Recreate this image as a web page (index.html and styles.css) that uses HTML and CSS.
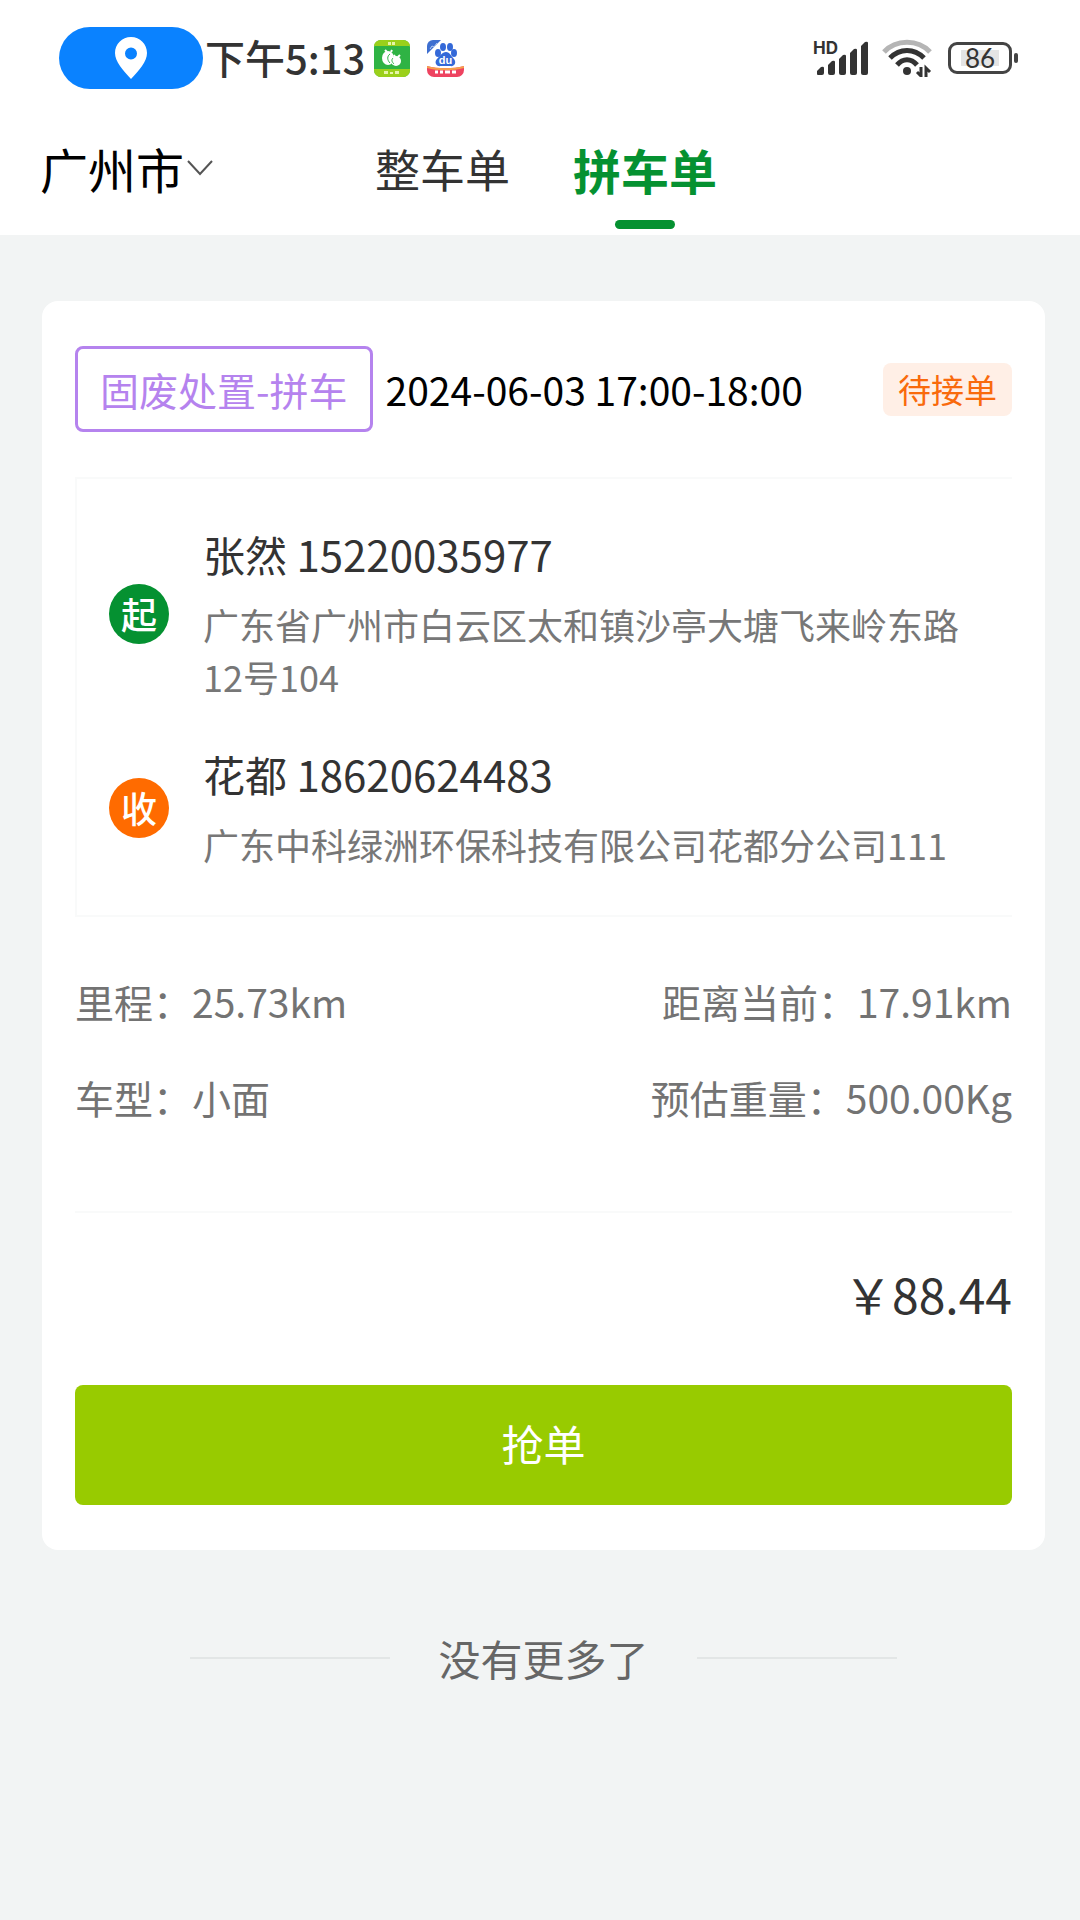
FILE: index.html
```html
<!DOCTYPE html>
<html lang="zh-CN">
<head>
<meta charset="utf-8">
<meta name="viewport" content="width=device-width, initial-scale=1">
<title>拼车单</title>
<link rel="stylesheet" href="styles.css">
</head>
<body>
<header class="top">
  <div class="status-bar">
    <span class="location-pill">
      <svg width="32" height="42" viewBox="0 0 32 42" aria-hidden="true"><path fill="#fff" fill-rule="evenodd" d="M16 0C7 0 0 7 0 16c0 9 8 17 16 26 8-9 16-17 16-26C32 7 25 0 16 0zm0 10.500a6 6 0 1 1 0 12 6 6 0 0 1 0-12z"/></svg>
    </span>
    <time class="clock">下午5:13</time>
    <svg class="app-icon" width="36" height="37" viewBox="0 0 36 37" aria-hidden="true">
      <rect width="36" height="37" rx="7" fill="#2fb344"/>
      <path d="M0 6a7 6 0 0 1 7-6h22a7 6 0 0 1 7 6zM0 29h36v1a7 7 0 0 1-7 7H7a7 7 0 0 1-7-7z" fill="#9bd01b"/>
      <path d="M14 2h3v3h-3zM18 2h3v3h-3zM10 31h4v3h-4zM16 32h3v2h-3zM21 31h4v3h-4z" fill="#e6f5a8"/>
      <path d="M11 10l2 2M18 10l-1 2M20 15l1 2M26 15l-2 2" stroke="#fff" stroke-width="2"/>
      <ellipse cx="14" cy="18" rx="6" ry="7" fill="#fff"/>
      <ellipse cx="22" cy="21" rx="5" ry="5" fill="#fff"/>
      <path d="M16 14c-3 2-3 6 0 9M19 18c-2 2-1 4 1 6" fill="none" stroke="#2fb344"/>
    </svg>
    <svg class="app-icon app-icon-last" width="37" height="37" viewBox="0 0 37 37" aria-hidden="true">
      <path d="M0 14V6a6 6 0 0 1 6-6h8z" fill="#3e6fd0"/>
      <path d="M3 9l2-3 2 1 3-4" fill="none" stroke="#b9cdf2"/>
      <g fill="#3469d8"><ellipse cx="11" cy="13" rx="3" ry="4"/><ellipse cx="16" cy="7" rx="3" ry="4"/><ellipse cx="23" cy="7" rx="3" ry="4"/><ellipse cx="27" cy="13" rx="3" ry="4"/><path d="M19 12c4 0 5 4 8 7 3 4 0 8-4 7h-9c-5 1-7-4-4-7 3-3 5-7 9-7z"/></g>
      <text x="18.500" y="24" class="paw-text">du</text>
      <path d="M0 26c11 3 26 3 37 0v4a7 7 0 0 1-7 7H7a7 7 0 0 1-7-7z" fill="#ee4360"/>
      <path d="M0 26c11 3 26 3 37 0v2c-11 3-26 3-37 0z" fill="#f5a04c"/>
      <path d="M8 32h3M13 32h3M18 32h5M25 32h4" stroke="#fff" stroke-width="3"/>
    </svg>
    <svg class="signal" width="56" height="49" viewBox="0 -6 56 49" aria-hidden="true">
      <text x="1" y="14" class="hd-text">HD</text>
      <g fill="#333"><path d="M5 31l4-4q3-1 3 1v5q0 2-2 2H6q-1 0-1-1zM16 25l4-4q3-1 3 1v11q0 2-2 2h-3q-2 0-2-2zM27 19l4-4q3-1 3 1v17q0 2-2 2h-3q-2 0-2-2zM38 13l4-4q3-1 3 1v23q0 2-2 2h-3q-2 0-2-2zM49 6l4-4q3-1 3 1v30q0 2-2 2h-3q-2 0-2-2z"/></g>
    </svg>
    <svg class="wifi" width="50" height="38" viewBox="0 0 50 38" aria-hidden="true">
      <g fill="none" stroke-width="5"><path d="M2 13C14 0 36 0 48 13" stroke="#b5b5b5"/><path d="M8 19c10-10 24-10 34 0" stroke="#333"/><path d="M15 26c6-7 14-7 20 0" stroke="#333"/></g>
      <circle cx="25" cy="32" r="4" fill="#333"/>
      <path d="M39 28v9l-4-4M44 38v-9l4 4" fill="none" stroke="#333" stroke-width="3"/>
    </svg>
    <span class="battery">86</span>
  </div>
  <nav class="nav">
    <button class="city" type="button">广州市<svg width="26" height="16" viewBox="0 0 26 16" aria-hidden="true"><path d="M1 1l12 13L25 1" fill="none" stroke="#555" stroke-width="2"/></svg></button>
    <div class="tabs">
      <button class="tab" type="button">整车单</button>
      <button class="tab tab-active" type="button">拼车单</button>
    </div>
  </nav>
</header>
<main class="content">
  <article class="card">
    <div class="card-head">
      <span class="tag">固废处置-拼车</span>
      <time class="when">2024-06-03 17:00-18:00</time>
      <span class="state">待接单</span>
    </div>
    <div class="route">
      <section class="stop">
        <span class="dot dot-start">起</span>
        <div class="stop-body">
          <p class="name">张然 15220035977</p>
          <p class="address">广东省广州市白云区太和镇沙亭大塘飞来岭东路12号104</p>
        </div>
      </section>
      <section class="stop">
        <span class="dot dot-end">收</span>
        <div class="stop-body">
          <p class="name">花都 18620624483</p>
          <p class="address">广东中科绿洲环保科技有限公司花都分公司111</p>
        </div>
      </section>
    </div>
    <div class="facts">
      <div class="fact-row"><span>里程：25.73km</span><span>距离当前：17.91km</span></div>
      <div class="fact-row"><span>车型：小面</span><span>预估重量：500.00Kg</span></div>
    </div>
    <p class="price">￥88.44</p>
    <button class="grab" type="button">抢单</button>
  </article>
  <p class="no-more">没有更多了</p>
</main>
</body>
</html>
```
FILE: styles.css
```css
* {
  box-sizing: border-box;
}

body {
  margin: 0;
  background: #f2f4f4;
  color: #333;
  font-family: "Noto Sans CJK SC", sans-serif;
}

p {
  margin: 0;
}

button {
  margin: 0;
  padding: 0;
  border: 0;
  background: none;
  color: inherit;
  font: inherit;
}

svg {
  flex: none;
}

/* Status bar and navigation */
.top {
  background: #fff;
  padding-top: 27px;
}

.status-bar {
  display: flex;
  align-items: center;
  height: 62px;
  padding: 0 68px 0 59px;
}

.location-pill {
  display: flex;
  align-items: center;
  justify-content: center;
  width: 144px;
  height: 62px;
  border-radius: 31px;
  background: #0a82ff;
}

.clock {
  margin: 0 9px 0 2px;
  padding-bottom: 2px;
  font-size: 40px;
  font-weight: 500;
  line-height: 56px;
}

.app-icon-last {
  margin-left: 17px;
}

.paw-text {
  fill: #fff;
  font: bold 11px "Liberation Sans", sans-serif;
  text-anchor: middle;
}

.signal {
  margin-left: auto;
}

.hd-text {
  fill: #333;
  font: bold 17px Inter, sans-serif;
}

.wifi {
  margin: 0 16px 0 14px;
}

.battery {
  position: relative;
  width: 64px;
  height: 32px;
  border: 3px solid #444;
  border-radius: 9px;
  background: linear-gradient(#e4e4e4, #e4e4e4) center / 38px 16px no-repeat;
  font-family: Lato, sans-serif;
  font-size: 26px;
  line-height: 26px;
  text-align: center;
}

.battery::after {
  content: "";
  position: absolute;
  top: 8px;
  right: -9px;
  width: 4px;
  height: 10px;
  border-radius: 2px;
  background: #444;
}

.nav {
  display: grid;
  grid-template-columns: 335px 1fr;
  align-items: start;
  padding: 48px 40px 6px;
}

.city {
  display: flex;
  align-items: center;
  gap: 3px;
  color: #000;
  font-size: 48px;
  line-height: 62px;
}

.tabs {
  display: flex;
  gap: 63px;
}

.tab {
  font-size: 45px;
  line-height: 64px;
  padding-bottom: 28px;
}

.tab-active {
  display: grid;
  gap: 19px;
  justify-items: center;
  padding: 0;
  color: #059131;
  font-size: 48px;
  font-weight: 700;
}

.tab-active::after {
  content: "";
  width: 60px;
  height: 9px;
  border-radius: 5px;
  background: #059131;
}

/* Order card */
.content {
  padding: 66px 35px 0 42px;
}

.card {
  padding: 45px 33px;
  border-radius: 16px;
  background: #fff;
}

.card-head {
  display: flex;
  align-items: center;
  padding-bottom: 45px;
}

.tag {
  padding: 0 22px;
  border: 3px solid #b583ee;
  border-radius: 8px;
  color: #b583ee;
  font-size: 39px;
  line-height: 80px;
}

.when {
  margin-left: 13px;
  color: #000;
  font-size: 39px;
  line-height: 56px;
}

.state {
  margin-left: auto;
  padding: 0 15px;
  border-radius: 8px;
  background: #ffefe6;
  color: #f96a0c;
  font-size: 33px;
  line-height: 53px;
}

.route {
  display: grid;
  gap: 44px;
  padding: 47px 32px 45px;
  border: 2px solid #f9fafa;
  border-right: 0;
}

.stop {
  display: flex;
  align-items: center;
  gap: 34px;
}

.dot {
  flex: none;
  width: 60px;
  height: 60px;
  border-radius: 50%;
  color: #fff;
  font-size: 36px;
  font-weight: 500;
  line-height: 58px;
  text-align: center;
}

.dot-start {
  background: #059131;
}

.dot-end {
  background: #ff6b00;
}

.name {
  margin-bottom: 16px;
  font-size: 42px;
  line-height: 56px;
}

.address {
  color: #777;
  font-size: 36px;
  line-height: 52px;
}

.facts {
  display: grid;
  gap: 40px;
  padding: 56px 0 86px;
  border-bottom: 2px solid #f9fafa;
  color: #737373;
  font-size: 39px;
  line-height: 56px;
}

.fact-row {
  display: flex;
  justify-content: space-between;
}

.price {
  padding: 48px 0 60px;
  font-size: 48px;
  line-height: 64px;
  text-align: right;
}

.grab {
  display: block;
  width: 100%;
  padding-bottom: 4px;
  border-radius: 8px;
  background: #98cb00;
  color: #fff;
  font-size: 42px;
  line-height: 116px;
}

.no-more {
  display: flex;
  align-items: center;
  justify-content: center;
  gap: 48px;
  padding: 78px 0;
  color: #666;
  font-size: 42px;
  line-height: 60px;
}

.no-more::before,
.no-more::after {
  content: "";
  width: 20%;
  height: 2px;
  background: #e3e6e6;
}
```
